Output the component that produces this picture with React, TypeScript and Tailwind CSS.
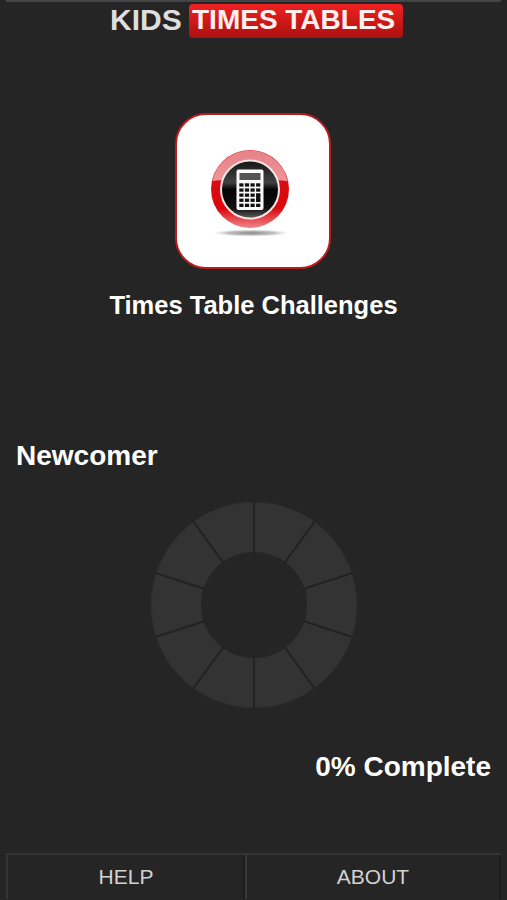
import React from 'react';

const SEGMENTS = 10;

const CalculatorBadge = () => (
  <svg width="84" height="92" viewBox="0 0 84 92" aria-label="Calculator">
    <defs>
      <linearGradient id="ring" x1="0" y1="0" x2="0" y2="1">
        <stop offset="0" stopColor="#d83a44" />
        <stop offset="0.45" stopColor="#d70b12" />
        <stop offset="0.75" stopColor="#dc080b" />
        <stop offset="1" stopColor="#ee858b" />
      </linearGradient>
      <linearGradient id="gloss" x1="0" y1="0" x2="0" y2="1">
        <stop offset="0" stopColor="#fff" stopOpacity="0.35" />
        <stop offset="1" stopColor="#fff" stopOpacity="0.57" />
      </linearGradient>
      <linearGradient id="core" x1="0" y1="0" x2="0" y2="1">
        <stop offset="0" stopColor="#161616" />
        <stop offset="0.38" stopColor="#414141" />
        <stop offset="0.5" stopColor="#050505" />
        <stop offset="0.82" stopColor="#101010" />
        <stop offset="1" stopColor="#606060" />
      </linearGradient>
      <radialGradient id="shade">
        <stop offset="0" stopColor="#888" />
        <stop offset="0.6" stopColor="#aaa" stopOpacity="0.75" />
        <stop offset="1" stopColor="#ddd" stopOpacity="0" />
      </radialGradient>
      <clipPath id="disc">
        <circle cx="42" cy="42" r="38.5" />
      </clipPath>
    </defs>
    <ellipse cx="43" cy="86" rx="39" ry="3.6" fill="url(#shade)" />
    <circle cx="42" cy="42" r="39" fill="url(#ring)" />
    <path d="M0 0H84V35Q70 32 64 34H20Q12 32 0 35Z" fill="url(#gloss)" clipPath="url(#disc)" />
    <circle cx="42" cy="42.5" r="29" fill="url(#core)" stroke="#f6e6e6" strokeWidth="2" />
    <rect x="28.5" y="22.5" width="27" height="40.5" rx="2" fill="#fafafa" />
    <rect x="31.5" y="26" width="21" height="7" fill="#555" />
    <g fill="#111">
      {[0, 1, 2, 3, 4].map((row) =>
        [0, 1, 2, 3].map((col) => (
          <rect key={`${row}-${col}`} x={31.3 + col * 5.6} y={36.3 + row * 5.1} width="4.2" height="3.3" />
        ))
      )}
      <rect x="48.1" y="46.5" width="4.2" height="8.5" />
    </g>
  </svg>
);

const ProgressRing = () => (
  <svg width="210" height="210" viewBox="-105 -105 210 210" aria-label="Progress">
    <circle r="78" fill="none" stroke="#333333" strokeWidth="50" />
    <circle r="102.7" fill="none" stroke="#2e2e2e" />
    <g stroke="#222222" strokeWidth="2">
      {Array.from({ length: SEGMENTS }, (_, i) => (
        <line key={i} y1="-51" y2="-104" transform={`rotate(${(i * 360) / SEGMENTS})`} />
      ))}
    </g>
  </svg>
);

const App = () => {
  return (
    <div
      className="flex h-[900px] w-[507px] flex-col overflow-hidden bg-[#252525] font-bold text-white"
      style={{ fontFamily: '"Liberation Sans", Arial, sans-serif' }}
    >
      <div className="mx-[6px] h-[2px] shrink-0 bg-[#424446]" />

      <header className="flex h-[38px] shrink-0 pl-[108px] pt-[2px]">
        <h1 className="flex">
          <span className="w-[81px] pl-[2px] text-[30px] leading-[32px] text-[#dedede]">KIDS</span>
          <span className="h-[34px] w-[214px] rounded-[4px] bg-linear-to-b from-[#ee2222] to-[#ad1010] pl-[3px] text-[28px] leading-[31px] whitespace-nowrap text-[#fff0ee]">
            TIMES TABLES
          </span>
        </h1>
      </header>

      <main className="flex flex-1 flex-col">
        <section className="flex flex-col items-center pt-[73px]">
          <button className="mr-[2px] flex h-[156px] w-[156px] justify-center rounded-[31px] border-2 border-[#b91c1e] bg-white pt-[32px] pr-[5px]">
            <CalculatorBadge />
          </button>
          <h2 className="mt-[20px] text-[25.5px] leading-[32px] whitespace-nowrap">Times Table Challenges</h2>
        </section>

        <section className="flex flex-col pt-[118px]">
          <h3 className="pl-[16px] text-[28px] leading-[34px]">Newcomer</h3>
          <div className="mt-[27px] flex justify-center">
            <ProgressRing />
          </div>
          <p className="mt-[40px] pr-[16px] text-right text-[28px] leading-[34px]">0% Complete</p>
        </section>
      </main>

      <footer className="mx-[6px] mb-[1px] flex h-[46px] shrink-0 border-t-2 border-[#343434] text-[21px] font-normal text-[#d2d2d2]">
        <button className="w-[239px] border-r-2 border-l-2 border-r-[#1d1d1d] border-l-[#343434] pl-px">HELP</button>
        <button className="flex-1 border-r-2 border-l-2 border-r-[#1d1d1d] border-l-[#383838]">ABOUT</button>
      </footer>
    </div>
  );
};

export default App;
